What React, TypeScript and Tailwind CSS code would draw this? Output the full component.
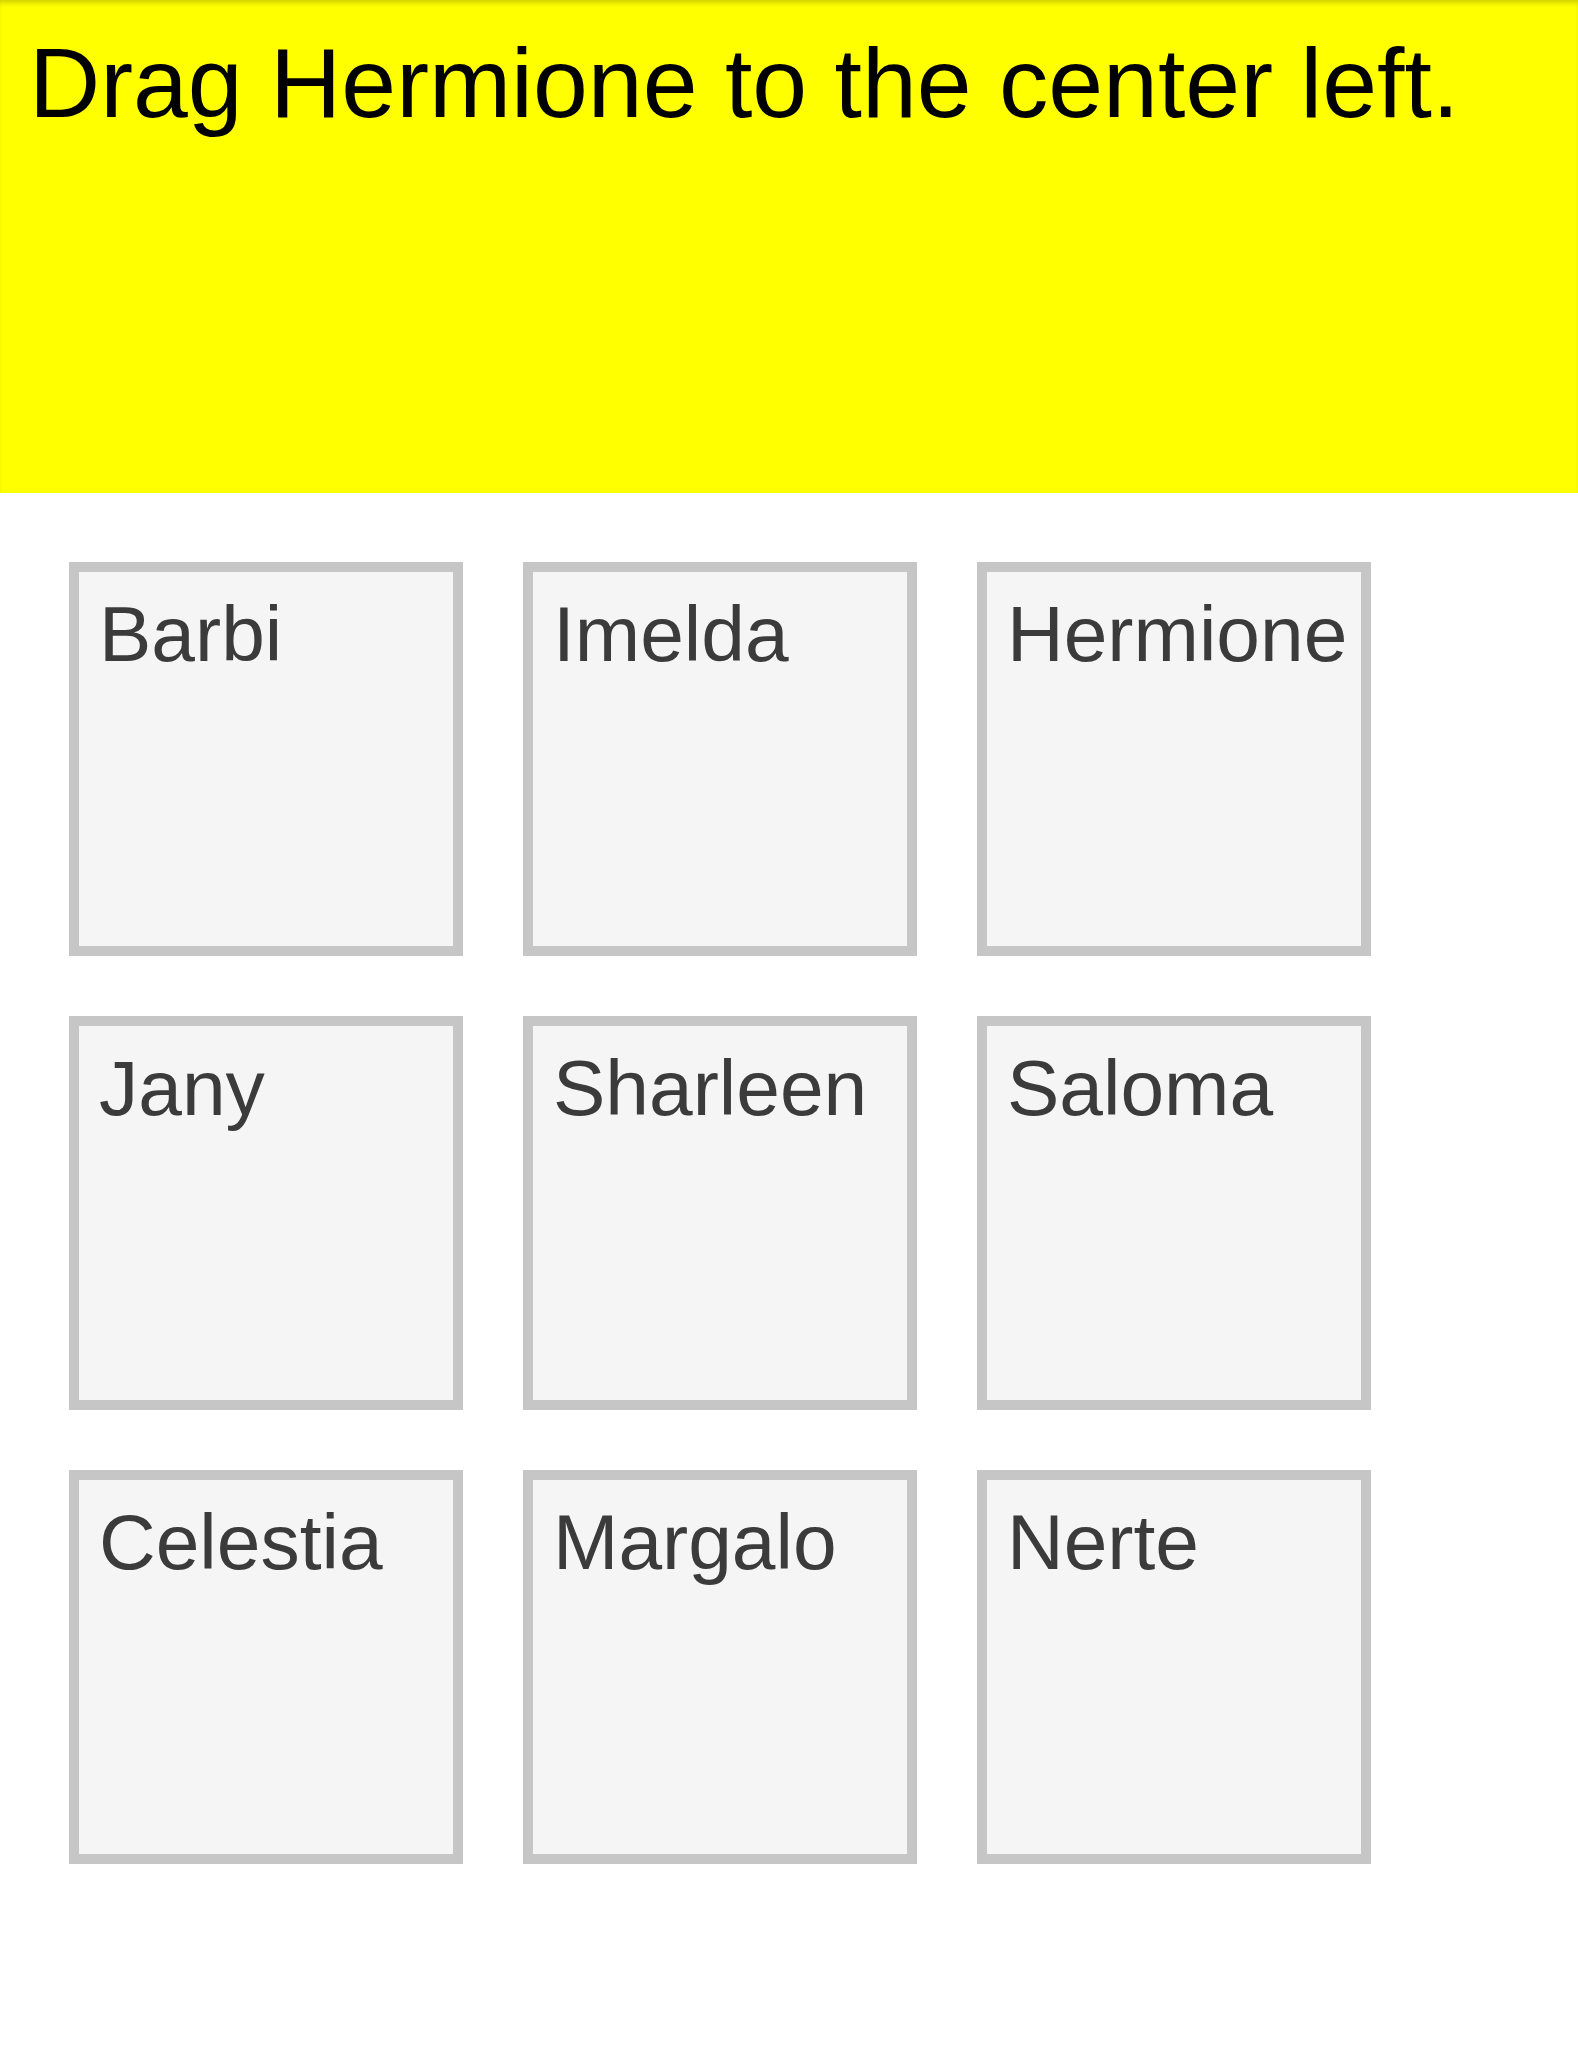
import React from 'react';

const names = ['Barbi', 'Imelda', 'Hermione', 'Jany', 'Sharleen', 'Saloma', 'Celestia', 'Margalo', 'Nerte'];

const App: React.FC = () => {
  return (
    <div className="min-h-[2071px] bg-white font-['Liberation_Sans',Arial,sans-serif]">
      {/* Instruction banner */}
      <div className="h-[493px] bg-[#ffff00] pl-[29px] pt-[28px] shadow-[inset_0_5px_5px_-2px_rgba(0,0,0,0.18)]">
        <p className="text-[98.6px] leading-[1.117] text-black">Drag Hermione to the center left.</p>
      </div>

      {/* Drop targets */}
      <div className="grid grid-cols-[repeat(3,394px)] gap-[60px] pl-[69px] pt-[69px]">
        {names.map((name) => (
          <div key={name} className="h-[394px] border-[10px] border-[#c6c6c6] bg-[#f5f5f5] px-[20px] pt-[19px]">
            <span className="text-[78.5px] leading-[1.117] text-[#3b3b3b] whitespace-nowrap">{name}</span>
          </div>
        ))}
      </div>
    </div>
  );
};

export default App;
